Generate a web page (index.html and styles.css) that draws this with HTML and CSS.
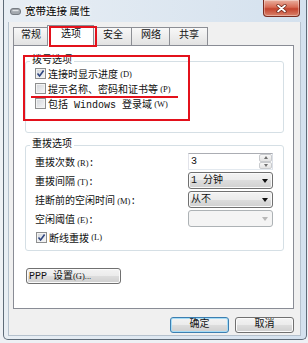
FILE: index.html
```html
<!DOCTYPE html>
<html lang="zh-CN">
<head>
<meta charset="utf-8">
<title>宽带连接 属性</title>
<link rel="stylesheet" href="styles.css">
</head>
<body>
<div class="window">
  <div class="titlebar">
    <svg class="app-icon" width="11" height="7" viewBox="0 0 11 7"><rect x="0.5" y="0.5" width="10" height="6" rx="2.5" fill="#a3a8ae" stroke="#767c83"/><rect x="2.5" y="2" width="6" height="1.2" fill="#e0e3e6"/></svg>
    <span class="title">宽带连接 属性</span>
    <div class="close"><svg width="11" height="9" viewBox="0 0 11 9"><path d="M2 1.5 L9 7.5 M9 1.5 L2 7.5" stroke="#6a2416" stroke-width="3.2" stroke-linecap="round"/><path d="M2 1.5 L9 7.5 M9 1.5 L2 7.5" stroke="#ffffff" stroke-width="1.7" stroke-linecap="round"/></svg></div>
  </div>
  <div class="client">
    <div class="tabs">
      <div class="tab">常规</div>
      <div class="tab active">选项</div>
      <div class="tab">安全</div>
      <div class="tab">网络</div>
      <div class="tab">共享</div>
    </div>
    <div class="mark mark-tab"></div>
    <div class="panel">
      <fieldset class="group group-dial">
        <legend>拨号选项</legend>
        <div class="checks">
          <div class="check"><span class="box"><svg width="9" height="9" viewBox="0 0 9 9"><path d="M1.5 4.5 L3.6 7 L7.6 1.6" fill="none" stroke="#2f4680" stroke-width="1.6"/></svg></span>连接时显示进度<span class="acc"> (D)</span></div>
          <div class="check"><span class="box"></span>提示名称、密码和证书等<span class="acc"> (P)</span></div>
          <div class="check"><span class="box"></span>包括 Windows 登录域<span class="acc"> (W)</span></div>
        </div>
      </fieldset>
      <fieldset class="group group-redial">
        <legend>重拨选项</legend>
        <div class="rows">
          <div class="row"><span>重拨次数<span class="acc"> (R)</span>:</span>
            <div class="spin"><span class="spin-val">3</span><span class="spin-btns"><span class="up"></span><span class="down"></span></span></div>
          </div>
          <div class="row"><span>重拨间隔<span class="acc"> (T)</span>:</span>
            <div class="combo"><span>1 分钟</span><span class="arrow"></span></div>
          </div>
          <div class="row"><span>挂断前的空闲时间<span class="acc"> (M)</span>:</span>
            <div class="combo"><span>从不</span><span class="arrow"></span></div>
          </div>
          <div class="row"><span>空闲阈值<span class="acc"> (E)</span>:</span>
            <div class="combo disabled"><span></span><span class="arrow"></span></div>
          </div>
          <div class="check check-redial"><span class="box"><svg width="9" height="9" viewBox="0 0 9 9"><path d="M1.5 4.5 L3.6 7 L7.6 1.6" fill="none" stroke="#2f4680" stroke-width="1.6"/></svg></span>断线重拨<span class="acc"> (L)</span></div>
        </div>
      </fieldset>
      <button class="btn btn-ppp">PPP 设置<span class="acc">(G)...</span></button>
      <div class="mark mark-box"></div>
      <div class="mark mark-line"></div>
    </div>
    <div class="footer">
      <button class="btn btn-default">确定</button>
      <button class="btn">取消</button>
    </div>
  </div>
</div>
</body>
</html>
```
FILE: styles.css
```css
* { box-sizing: border-box; }
html, body { margin: 0; padding: 0; }
body {
  width: 308px;
  height: 343px;
  overflow: hidden;
  background: #eef1f5;
  font-family: "Liberation Mono", "Noto Sans CJK SC", monospace;
  font-size: 10px;
  color: #111;
}
.window {
  margin-left: 3px;
  width: 304px;
  height: 340px;
  border: 1px solid #5e6b78;
  border-top: 0;
  border-radius: 0 0 5px 5px;
  background: linear-gradient(to right, #e8eef4, #d4e1ee);
  padding: 0 5px 3px 4px;
  display: flex;
  flex-direction: column;
}
.titlebar {
  height: 22px;
  flex-shrink: 0;
  display: flex;
  align-items: center;
}
.app-icon { margin-left: 2px; margin-top: 1px; }
.title {
  margin-left: 4px;
  font-family: "Noto Sans CJK SC", sans-serif;
  font-size: 10.5px;
  line-height: 14px;
  color: #000;
  text-shadow: 0 0 5px #fff, 0 0 3px #fff;
}
.close {
  margin-left: auto;
  margin-right: 1px;
  align-self: flex-start;
  width: 37px;
  height: 17px;
  border: 1px solid #7a2c20;
  border-top: 0;
  border-radius: 0 0 4px 4px;
  background: linear-gradient(#eab0a0, #d86c55 45%, #c4442e 55%, #d9826a);
  box-shadow: inset 0 0 0 1px rgba(255, 255, 255, 0.35);
  display: flex;
  align-items: center;
  justify-content: center;
}
.client {
  flex: 1;
  position: relative;
  background: #f0f0f0;
  border: 1px solid #b5c1cd;
  border-top: 0;
  padding: 3px 6px 0 4px;
  display: flex;
  flex-direction: column;
}
.tabs {
  display: flex;
  align-items: flex-end;
  height: 21px;
  margin-bottom: -1px;
  position: relative;
  z-index: 1;
}
.tab {
  height: 18px;
  margin-bottom: 1px;
  margin-left: -1px;
  padding: 0 8px 0 9px;
  border: 1px solid #8c8e94;
  border-bottom: 0;
  background: linear-gradient(#f8f8f8, #e2e2e2);
  line-height: 16px;
}
.tab:first-child { margin-left: 0; padding: 0 6px 0 7px; }
.tab.active {
  height: 21px;
  margin-bottom: 0;
  padding: 0 12px 0 13px;
  background: #fff;
  line-height: 18px;
  position: relative;
  z-index: 1;
}
.panel {
  position: relative;
  height: 264px;
  flex-shrink: 0;
  background: #fff;
  border: 1px solid #898c95;
  padding: 9px 9px 0 11px;
  display: flex;
  flex-direction: column;
}
.group {
  margin: 0;
  min-width: 0;
  border: 1px solid #d5dfe5;
  border-radius: 3px;
  padding: 0 10px 0 9px;
}
.group legend {
  padding: 0 2px;
  margin-left: -5px;
  line-height: 12px;
}
.group-dial { padding-bottom: 21px; }
.checks { margin-top: -1px; }
.check {
  height: 15px;
  display: flex;
  align-items: center;
  white-space: pre;
}
.box {
  width: 11px;
  height: 11px;
  margin-right: 2px;
  border: 1px solid #8e8f8f;
  background: linear-gradient(135deg, #d2d5da, #f7f7f7);
  box-shadow: inset 0 0 0 1px #f3f3f3;
  display: flex;
  align-items: center;
  justify-content: center;
  flex-shrink: 0;
}
.acc {
  font-family: "Liberation Serif", serif;
  font-size: 8.5px;
}
.group-redial { margin-top: 6px; padding-bottom: 4px; }
.rows { margin-top: 1px; }
.row {
  height: 19px;
  display: flex;
  align-items: center;
  justify-content: space-between;
  white-space: nowrap;
}
.check-redial { height: 18px; padding-left: 1px; }
.spin {
  width: 85px;
  height: 17px;
  display: flex;
  border: 1px solid;
  border-color: #abadb3 #dbdfe6 #e3e9ef #e2e3ea;
  background: #fff;
}
.spin-val { flex: 1; padding-left: 2px; line-height: 15px; }
.spin-btns {
  width: 13px;
  display: flex;
  flex-direction: column;
}
.spin-btns span {
  flex: 1;
  border: 1px solid #c9cbce;
  border-radius: 2px;
  background: linear-gradient(#f7f7f7, #e3e3e3);
  display: flex;
  align-items: center;
  justify-content: center;
}
.spin-btns span::after {
  content: "";
  border-left: 2.5px solid transparent;
  border-right: 2.5px solid transparent;
}
.spin-btns .up::after { border-bottom: 3px solid #707070; }
.spin-btns .down::after { border-top: 3px solid #707070; }
.combo {
  width: 85px;
  height: 17px;
  display: flex;
  align-items: center;
  justify-content: space-between;
  padding: 0 4px 0 2px;
  border: 1px solid #707070;
  border-radius: 3px;
  background: linear-gradient(#f3f3f3 0%, #ebebeb 50%, #dddddd 50%, #d0d0d0 100%);
  box-shadow: inset 0 0 0 1px #fafafa;
  line-height: 15px;
}
.arrow {
  border-left: 3px solid transparent;
  border-right: 3px solid transparent;
  border-top: 4px solid #111;
}
.combo.disabled {
  border-color: #adb2b5;
  background: #f4f4f4;
  box-shadow: none;
}
.combo.disabled .arrow { border-top-color: #b8b8b8; }
.btn {
  font: inherit;
  color: #111;
  height: 16px;
  padding: 0;
  border: 1px solid #707070;
  border-radius: 3px;
  background: linear-gradient(#f3f3f3 0%, #ebebeb 50%, #dddddd 50%, #cfcfcf 100%);
  box-shadow: inset 0 0 0 1px #fbfbfb;
  line-height: 14px;
  white-space: nowrap;
}
.btn-ppp {
  align-self: flex-start;
  width: 95px;
  margin: 17px 0 0 1px;
  padding-left: 2px;
  text-align: left;
}
.footer {
  display: flex;
  justify-content: flex-end;
  gap: 6px;
  margin-top: 8px;
}
.footer .btn { width: 59px; }
.btn-default {
  border-color: #3c7fb1;
  box-shadow: inset 0 0 0 1px #a6dcf6;
}
.mark {
  position: absolute;
  border: 2px solid #e3111b;
  pointer-events: none;
  z-index: 3;
}
.mark-tab { left: 40px; top: 4px; width: 48px; height: 21px; }
.mark-box { left: 9px; top: 9px; width: 167px; height: 66px; }
.mark-line {
  left: 17px;
  top: 50px;
  width: 147px;
  height: 2px;
  border: 0;
  background: #e3111b;
}
```
